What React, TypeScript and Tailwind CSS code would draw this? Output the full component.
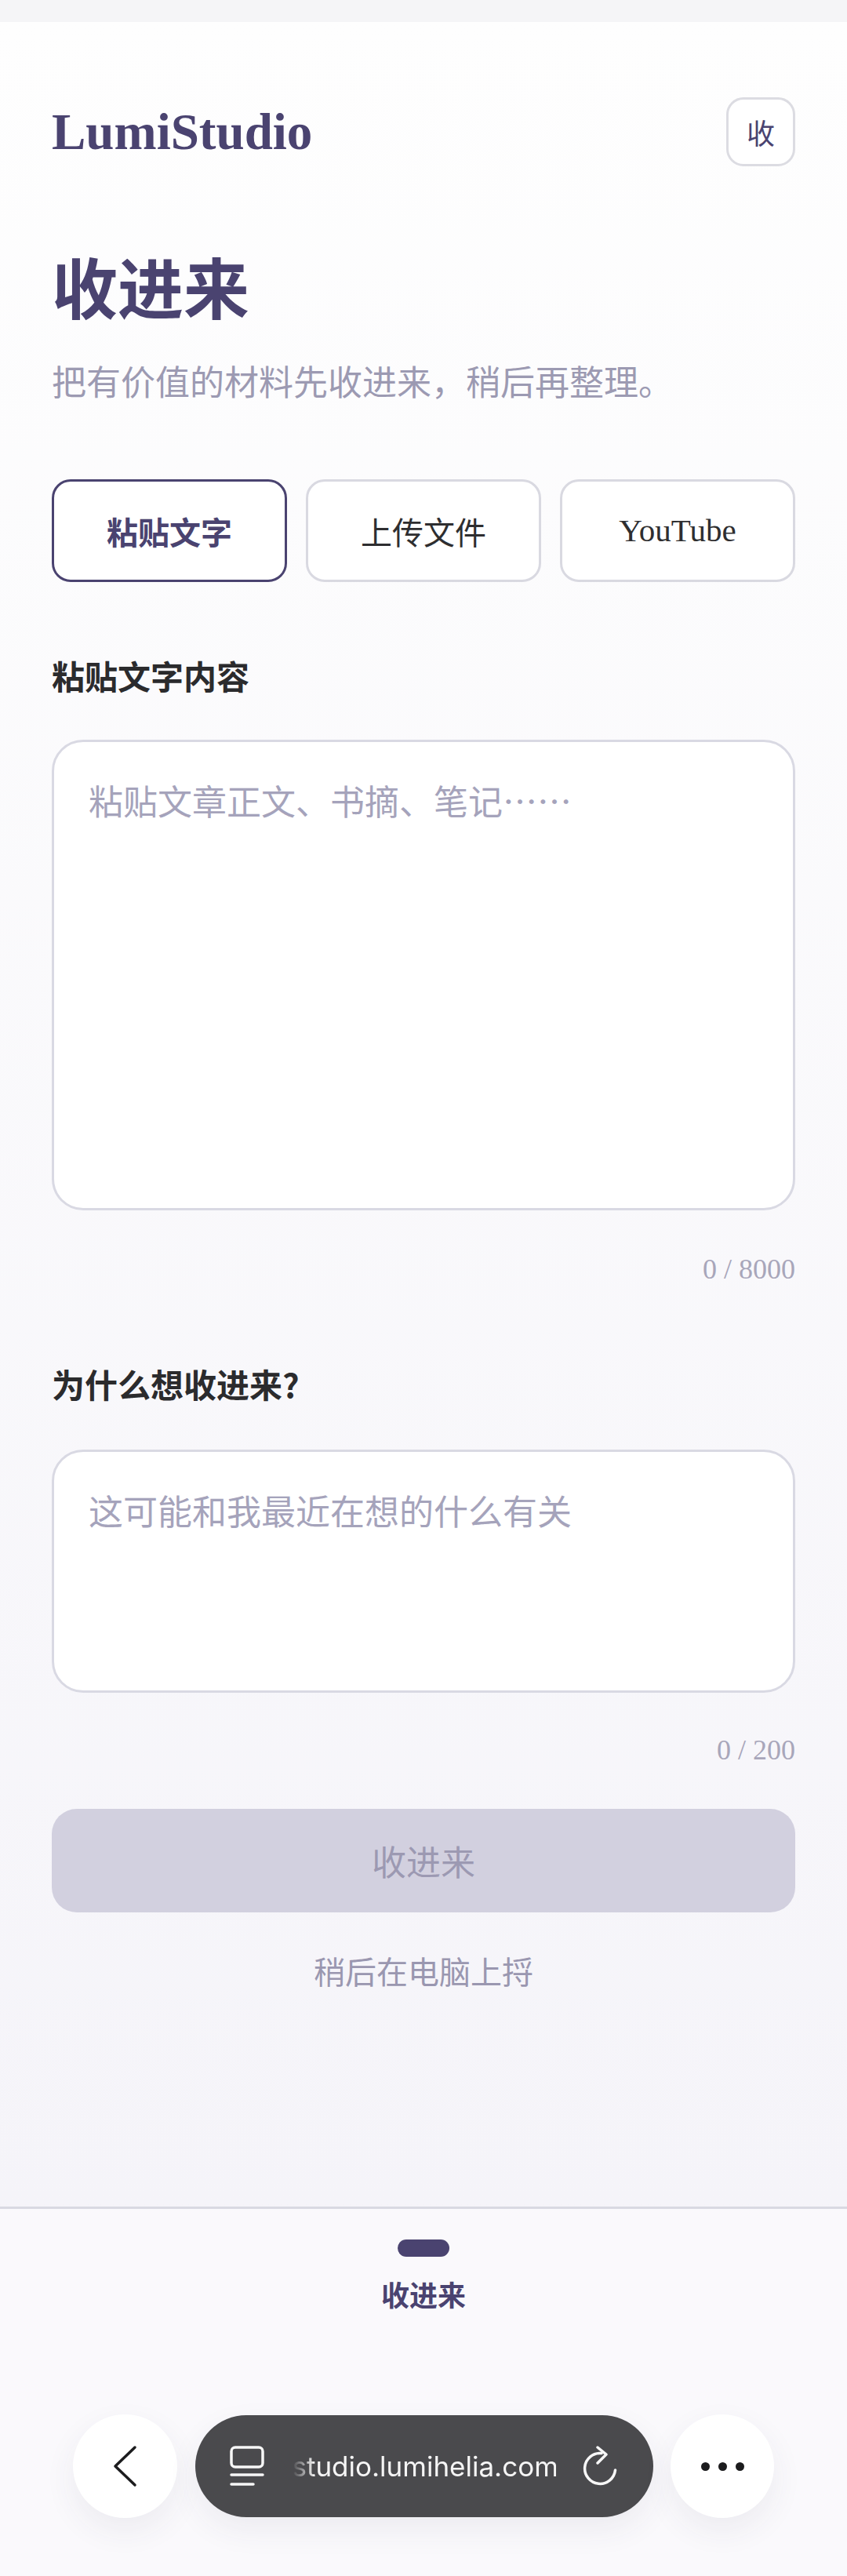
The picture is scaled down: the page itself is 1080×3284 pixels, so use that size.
const cjk = "font-['Noto_Sans_CJK_SC','Liberation_Sans',sans-serif]";

function Tab({ label, active, serif }: { label: string; active?: boolean; serif?: boolean }) {
  return (
    <div
      className={
        "flex h-[131px] flex-1 items-center justify-center rounded-[24px] bg-white text-[40px] " +
        (active
          ? "border-[3px] border-[#4a4370] font-bold text-[#4a4370]"
          : "border-[3px] border-[#d9d9e1] text-[#2e2e30]") +
        (serif ? " font-['Liberation_Serif',serif] text-[41px]" : "")
      }
    >
      {label}
    </div>
  );
}

function Label({ children, className }: { children: string; className: string }) {
  return <div className={"h-[60px] text-[42px] leading-[60px] font-bold text-[#2b2b2d] " + className}>{children}</div>;
}

function Counter({ children, className }: { children: string; className: string }) {
  return (
    <div className={"h-[50px] text-right font-['Liberation_Serif',serif] text-[36px] leading-[50px] text-[#a8a6ba] " + className}>
      {children}
    </div>
  );
}

function Field({ placeholder, className }: { placeholder: string; className: string }) {
  return (
    <div className={"rounded-[40px] border-[3px] border-[#d9d9e3] bg-white px-[44px] pt-[44px] text-[44px] leading-[60px] text-[#a5a3bb] " + className}>
      {placeholder}
    </div>
  );
}

export default function App() {
  return (
    <div className={"flex h-[3284px] w-[1080px] flex-col overflow-hidden bg-[#f5f5f9] " + cjk}>
      <div className="h-[28px] shrink-0 bg-[#f5f5f7]" />
      <main className="flex flex-1 flex-col bg-gradient-to-b from-[#fefefe] to-[#f5f4f9] px-[66px]">
        <header className="mt-[96px] flex h-[88px] items-center justify-between">
          <div className="font-['Liberation_Serif',serif] text-[65px] leading-[88px] font-bold text-[#4a4370]">LumiStudio</div>
          <div className="flex h-[88px] w-[88px] items-center justify-center rounded-[22px] border-[3px] border-[#dcdce2] bg-white text-[36px] text-[#4a4370]">
            收
          </div>
        </header>
        <h1 className="mt-[102px] text-[84px] leading-[100px] font-bold text-[#4a4370]">收进来</h1>
        <p className="mt-[41px] h-[60px] text-[44px] leading-[60px] text-[#9c9ab2]">把有价值的材料先收进来，稍后再整理。</p>
        <div className="mt-[96px] flex gap-[24px]">
          <Tab label="粘贴文字" active />
          <Tab label="上传文件" />
          <Tab label="YouTube" serif />
        </div>
        <Label className="mt-[89px]">粘贴文字内容</Label>
        <Field placeholder="粘贴文章正文、书摘、笔记……" className="mt-[52px] h-[600px]" />
        <Counter className="mt-[50px]">0 / 8000</Counter>
        <Label className="mt-[91px]">为什么想收进来?</Label>
        <Field placeholder="这可能和我最近在想的什么有关" className="mt-[54px] h-[310px]" />
        <Counter className="mt-[48px]">0 / 200</Counter>
        <div className="mt-[50px] flex h-[132px] items-center justify-center rounded-[32px] bg-[#d2d0df] text-[44px] text-[#9c99b2]">收进来</div>
        <div className="mt-[44px] h-[60px] text-center text-[40px] leading-[60px] text-[#9a97b0]">稍后在电脑上捋</div>
      </main>
      <nav className="h-[471px] shrink-0 border-t-[3px] border-[#d9d9e2] bg-[#faf9fc]">
        <div className="mx-auto mt-[39px] h-[22px] w-[66px] rounded-full bg-[#4a4370]" />
        <div className="mt-[20px] h-[54px] text-center text-[36px] leading-[54px] font-bold text-[#4a4370]">收进来</div>
        <div className="mt-[127px] flex items-center justify-between px-[93px]">
          <div className="flex h-[132px] w-[133px] items-center justify-center rounded-full bg-white shadow-[0_16px_40px_rgba(60,60,80,0.07)]">
            <svg width="40" height="56" viewBox="0 0 40 56" fill="none" stroke="#1c1c1e" strokeWidth="3.5" strokeLinecap="round" strokeLinejoin="round">
              <path d="M32 4 7 28l25 24" />
            </svg>
          </div>
          <div className="flex h-[130px] w-[584px] items-center rounded-full bg-[#4a4a4d] pr-[44px] pl-[44px] shadow-[0_16px_40px_rgba(60,60,80,0.07)]">
            <svg width="44" height="52" viewBox="0 0 44 52" fill="none" stroke="#f7f7f7" strokeWidth="3.5" strokeLinecap="round" className="shrink-0">
              <rect x="2" y="2" width="40" height="25" rx="5" />
              <path d="M2 37h40M2 49h28" />
            </svg>
            <div className="ml-[36px] w-[336px] overflow-hidden text-right font-['Inter',sans-serif] text-[35px] leading-[50px] whitespace-nowrap text-[#f5f5f5] [mask-image:linear-gradient(90deg,transparent_0,black_28px)]">
              studio.lumihelia.com
            </div>
            <svg width="48" height="52" viewBox="0 0 48 52" fill="none" stroke="#f7f7f7" strokeWidth="3.5" strokeLinecap="round" strokeLinejoin="round" className="ml-auto shrink-0">
              <path d="M26 9.5A19.5 19.5 0 1 0 43.5 31" />
              <path d="M21 2l11 9-11 11" />
            </svg>
          </div>
          <div className="flex h-[132px] w-[132px] items-center justify-center gap-[11px] rounded-full bg-white shadow-[0_16px_40px_rgba(60,60,80,0.07)]">
            <span className="h-[11px] w-[11px] rounded-full bg-[#1c1c1e]" />
            <span className="h-[11px] w-[11px] rounded-full bg-[#1c1c1e]" />
            <span className="h-[11px] w-[11px] rounded-full bg-[#1c1c1e]" />
          </div>
        </div>
      </nav>
    </div>
  );
}
